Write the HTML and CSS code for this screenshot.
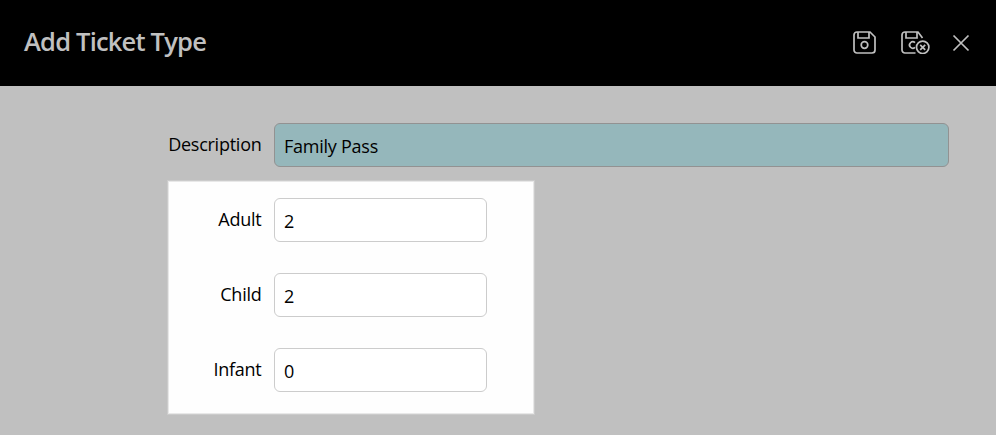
FILE: index.html
```html
<!DOCTYPE html>
<html lang="en">
<head>
<meta charset="utf-8">
<title>Add Ticket Type</title>
<link rel="stylesheet" href="styles.css">
</head>
<body>
<header class="header">
  <h1 class="title">Add Ticket Type</h1>
  <div class="actions">
    <button class="action" aria-label="Save">
      <svg width="23" height="23" viewBox="0 0 23 23"><path d="M4 1H17L22 6V19a3 3 0 0 1-3 3H4a3 3 0 0 1-3-3V4a3 3 0 0 1 3-3zM5 1V7H16V1"/><circle cx="11.500" cy="14" r="3.300"/></svg>
    </button>
    <button class="action" aria-label="Save and close">
      <svg width="29" height="23" viewBox="0 0 29 23"><path d="M14.500 22H4a3 3 0 0 1-3-3V4a3 3 0 0 1 3-3H17L21.500 7M5 1V7H16V1M14 11.700A3.200 3.200 0 1 0 14 16.300"/><circle cx="21.700" cy="16.300" r="6.200"/><path d="M19.200 13.800l5 5M24.200 13.800l-5 5"/></svg>
    </button>
    <button class="action" aria-label="Close">
      <svg width="18" height="18" viewBox="0 0 18 18"><path d="M1.500 1.500l15 15M16.500 1.500l-15 15"/></svg>
    </button>
  </div>
</header>
<main class="form">
  <div class="row">
    <label class="label" for="description">Description</label>
    <input class="input input-wide" id="description" value="Family Pass">
  </div>
  <section class="panel">
    <div class="row">
      <label class="label" for="adult">Adult</label>
      <input class="input" id="adult" value="2">
    </div>
    <div class="row">
      <label class="label" for="child">Child</label>
      <input class="input" id="child" value="2">
    </div>
    <div class="row">
      <label class="label" for="infant">Infant</label>
      <input class="input" id="infant" value="0">
    </div>
  </section>
</main>
</body>
</html>
```
FILE: styles.css
```css
* {
  box-sizing: border-box;
}

body {
  margin: 0;
  height: 435px;
  overflow: hidden;
  background: #c0c0c0;
  color: #000;
  font-family: "Open Sans", sans-serif;
  font-size: 18px;
  letter-spacing: -0.25px;
}

.header {
  display: flex;
  align-items: center;
  justify-content: space-between;
  height: 86px;
  padding: 0 26px 1px 24px;
  background: #000;
  color: #c0c0c0;
}

.title {
  margin: 0 0 3px;
  font-size: 25.5px;
  font-weight: 560;
  letter-spacing: -0.8px;
  line-height: 34px;
}

.actions {
  display: flex;
  align-items: center;
}

.action {
  display: flex;
  margin-left: 22px;
  padding: 0;
  border: 0;
  background: none;
  color: inherit;
}

.action:nth-child(2) {
  margin-left: 25px;
}

.action svg {
  fill: none;
  stroke: currentColor;
  stroke-width: 1.7;
}

.form {
  padding: 37px 47px 0 167px;
}

.row {
  display: flex;
  align-items: center;
  height: 44px;
}

.label {
  width: 94.5px;
  margin-right: 12.5px;
  padding-bottom: 2px;
  text-align: right;
  white-space: nowrap;
}

.input {
  width: 213px;
  height: 44px;
  padding: 2px 9px 1px;
  border: 1px solid #ccc;
  border-radius: 6px;
  background: #fff;
  color: #000;
  font: inherit;
  letter-spacing: inherit;
}

.input-wide {
  flex: 1;
  border-color: #929292;
  background: #95b7bb;
}

.panel {
  display: flex;
  flex-direction: column;
  gap: 31px;
  width: 368px;
  height: 235px;
  margin-top: 13px;
  padding-top: 17px;
  border: 1px solid #cbcbcb;
  background: #fefefe;
  box-shadow: inset 0 0 0 1px #e8e8e8;
}

.panel .label {
  width: 93.5px;
}
```
